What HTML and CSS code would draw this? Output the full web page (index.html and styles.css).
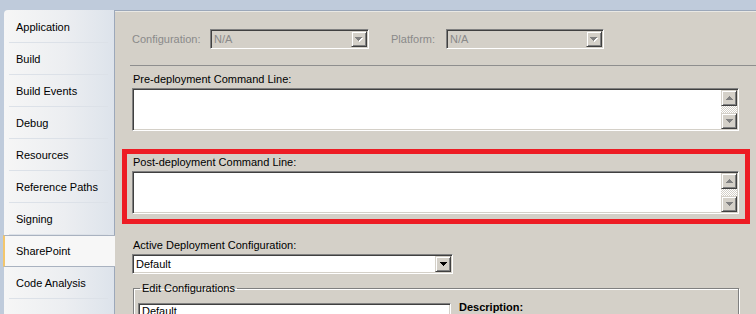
FILE: index.html
```html
<!DOCTYPE html>
<html lang="en">

<head>
    <meta charset="utf-8">
    <meta name="viewport" content="width=device-width, initial-scale=1.0">
    <title>SharePoint - Project Properties</title>

    <link rel="stylesheet" href="styles.css">
</head>

<body>
    <div class="window">
        <nav class="tabs">
            <a href="#">Application</a>
            <a href="#">Build</a>
            <a href="#">Build Events</a>
            <a href="#">Debug</a>
            <a href="#">Resources</a>
            <a href="#">Reference Paths</a>
            <a href="#">Signing</a>
            <a href="#" class="active">SharePoint</a>
            <a href="#">Code Analysis</a>
        </nav>

        <main class="page">
            <div class="config_row">
                <span class="label disabled cfg_label">Configuration:</span>
                <div class="combo disabled cfg_combo">
                    <span class="combo_text">N/A</span>
                    <span class="btn drop">
                        <svg width="8" height="5" viewBox="0 0 8 5"><path class="shadow" d="M1 1h7v1h-1v1h-1v1h-1v1h-1v-1h-1v-1h-1v-1h-1z"/><path d="M0 0h7v1h-1v1h-1v1h-1v1h-1v-1h-1v-1h-1v-1h-1z"/></svg>
                    </span>
                </div>
                <span class="label disabled plat_label">Platform:</span>
                <div class="combo disabled plat_combo">
                    <span class="combo_text">N/A</span>
                    <span class="btn drop">
                        <svg width="8" height="5" viewBox="0 0 8 5"><path class="shadow" d="M1 1h7v1h-1v1h-1v1h-1v1h-1v-1h-1v-1h-1v-1h-1z"/><path d="M0 0h7v1h-1v1h-1v1h-1v1h-1v-1h-1v-1h-1v-1h-1z"/></svg>
                    </span>
                </div>
            </div>

            <hr class="sep">

            <div class="field pre">
                <label>Pre-deployment Command Line:</label>
                <div class="textbox">
                    <div class="vscroll">
                        <span class="btn sbtn"><svg width="7" height="4" viewBox="0 0 7 4"><path d="M3 0h1v1h1v1h1v1h1v1h-7v-1h1v-1h1v-1h1z"/></svg></span>
                        <span class="track"></span>
                        <span class="btn sbtn"><svg width="7" height="4" viewBox="0 0 7 4"><path d="M0 0h7v1h-1v1h-1v1h-1v1h-1v-1h-1v-1h-1v-1h-1z"/></svg></span>
                    </div>
                </div>
            </div>

            <div class="field highlight">
                <label>Post-deployment Command Line:</label>
                <div class="textbox">
                    <div class="vscroll">
                        <span class="btn sbtn"><svg width="7" height="4" viewBox="0 0 7 4"><path d="M3 0h1v1h1v1h1v1h1v1h-7v-1h1v-1h1v-1h1z"/></svg></span>
                        <span class="track"></span>
                        <span class="btn sbtn"><svg width="7" height="4" viewBox="0 0 7 4"><path d="M0 0h7v1h-1v1h-1v1h-1v1h-1v-1h-1v-1h-1v-1h-1z"/></svg></span>
                    </div>
                </div>
            </div>

            <div class="field active_cfg">
                <label>Active Deployment Configuration:</label>
                <div class="combo enabled">
                    <span class="combo_text">Default</span>
                    <span class="btn drop">
                        <svg width="7" height="4" viewBox="0 0 7 4"><path d="M0 0h7v1h-1v1h-1v1h-1v1h-1v-1h-1v-1h-1v-1h-1z"/></svg>
                    </span>
                </div>
            </div>

            <fieldset class="edit_cfg">
                <legend>Edit Configurations</legend>
                <div class="listbox">Default</div>
                <p class="desc">Description:</p>
            </fieldset>
        </main>
    </div>
</body>

</html>
```

FILE: styles.css
```css
* {
    box-sizing: border-box;
}

html,
body {
    margin: 0;
}

body {
    width: 756px;
    height: 314px;
    overflow: hidden;
    font-family: "Liberation Sans", Arial, sans-serif;
    font-size: 11px;
    color: #000;
    background-color: #bfcbdb;
}

.window {
    display: grid;
    grid-template-columns: 111px 1fr;
    height: 304px;
    margin-top: 10px;
    margin-left: 4px;
}

/* --------- TABS --------------- */
.tabs {
    position: relative;
    display: flex;
    flex-direction: column;
    padding-top: 1px;
    background: linear-gradient(to right, #f6f6f6, #eceef1 55%, #dde3eb);
    border-right: 1px solid #9ca8ba;
    border-top-left-radius: 4px;
}

.tabs::after {
    content: "";
    position: absolute;
    left: 0;
    bottom: 0;
    width: 0;
    height: 0;
    border-top: 14px solid transparent;
    border-left: 26px solid #bfcbdb;
}

.tabs a {
    height: 32px;
    line-height: 32px;
    padding-left: 12px;
    color: #000;
    text-decoration: none;
    background: linear-gradient(to right, transparent 5px, #dce1e8 5px, #dce1e8 calc(100% - 6px), transparent 0) left bottom / 100% 1px no-repeat;
}

.tabs a.active {
    line-height: 30px;
    margin-left: -1px;
    margin-right: -1px;
    padding-left: 11px;
    background: #f7f7f7;
    border-top: 1px solid #a9b2c0;
    border-bottom: 1px solid #a9b2c0;
    border-left: 2px solid #f3c66c;
}

/* --------- PAGE --------------- */
.page {
    padding: 18px 17px 0 17px;
    background-color: #d4d0c8;
    border-top: 1px solid #9ca8ba;
    box-shadow: inset 0 1px #e9e8e4;
}

.label,
.field label {
    display: block;
    line-height: 13px;
}

.disabled {
    color: #8a8a8a;
}

.config_row {
    display: flex;
    align-items: center;
    height: 20px;
}

.cfg_label {
    width: 78px;
}

.cfg_combo {
    width: 159px;
    margin-right: 22px;
}

.plat_label {
    width: 55px;
}

.plat_combo {
    width: 158px;
}

.sep {
    height: 0;
    margin: 16px -17px 0 -2px;
    border: 0;
    border-top: 1px solid #8e8e8e;
}

/* sunken field, windows classic */
.combo,
.textbox,
.listbox {
    border: 1px solid;
    border-color: #808080 #fff #fff #808080;
    padding: 1px;
    box-shadow: inset 1px 1px #404040, inset -1px -1px #d4d0c8;
}

.combo {
    display: flex;
    align-items: center;
    height: 20px;
}

.combo.enabled {
    width: 321px;
    background-color: #fff;
}

.combo_text {
    flex: 1;
    padding-left: 2px;
    line-height: 16px;
}

.btn {
    display: flex;
    align-items: center;
    justify-content: center;
    width: 16px;
    height: 16px;
    background-color: #d4d0c8;
    border: 1px solid;
    border-color: #d4d0c8 #404040 #404040 #d4d0c8;
    box-shadow: inset 1px 1px #fff, inset -1px -1px #808080;
}

.btn svg {
    display: block;
    shape-rendering: crispEdges;
}

.disabled .btn svg path {
    fill: #808080;
}

.disabled .btn svg path.shadow {
    fill: #fff;
}

.enabled .btn svg path {
    fill: #000;
}

.field label {
    margin-bottom: 2px;
}

.pre {
    margin-top: 7px;
}

.textbox {
    display: flex;
    justify-content: flex-end;
    height: 43px;
    background-color: #fff;
}

.vscroll {
    display: flex;
    flex-direction: column;
    width: 16px;
}

.sbtn svg path {
    fill: #808080;
}

.track {
    flex: 1;
    background: repeating-conic-gradient(#fff 0 25%, #d4d0c8 0 50%) 0 0 / 2px 2px;
}

/* red annotation box */
.highlight {
    margin: 18px -11px 0 -10px;
    padding: 2px 6px 5px 5px;
    border: 5px solid #ed1c24;
}

.highlight label {
    padding-left: 1px;
}

.pre label,
.active_cfg label {
    padding-left: 1px;
}

.active_cfg {
    margin-top: 15px;
}

/* -------------- EDIT CONFIGURATIONS ------------ */
.edit_cfg {
    display: flex;
    align-items: flex-start;
    margin: 8px 0 0 1px;
    padding: 8px 4px 0 4px;
    border: 1px solid #808080;
    box-shadow: inset 1px 1px #fff, 1px 1px #fff;
    min-height: 60px;
}

.edit_cfg legend {
    margin-left: 2px;
    padding: 0 2px;
    line-height: 13px;
}

.listbox {
    width: 313px;
    height: 60px;
    padding: 1px 3px;
    background-color: #fff;
    line-height: 13px;
}

.desc {
    margin: -2px 0 0 8px;
    font-weight: bold;
    line-height: 13px;
}
```
